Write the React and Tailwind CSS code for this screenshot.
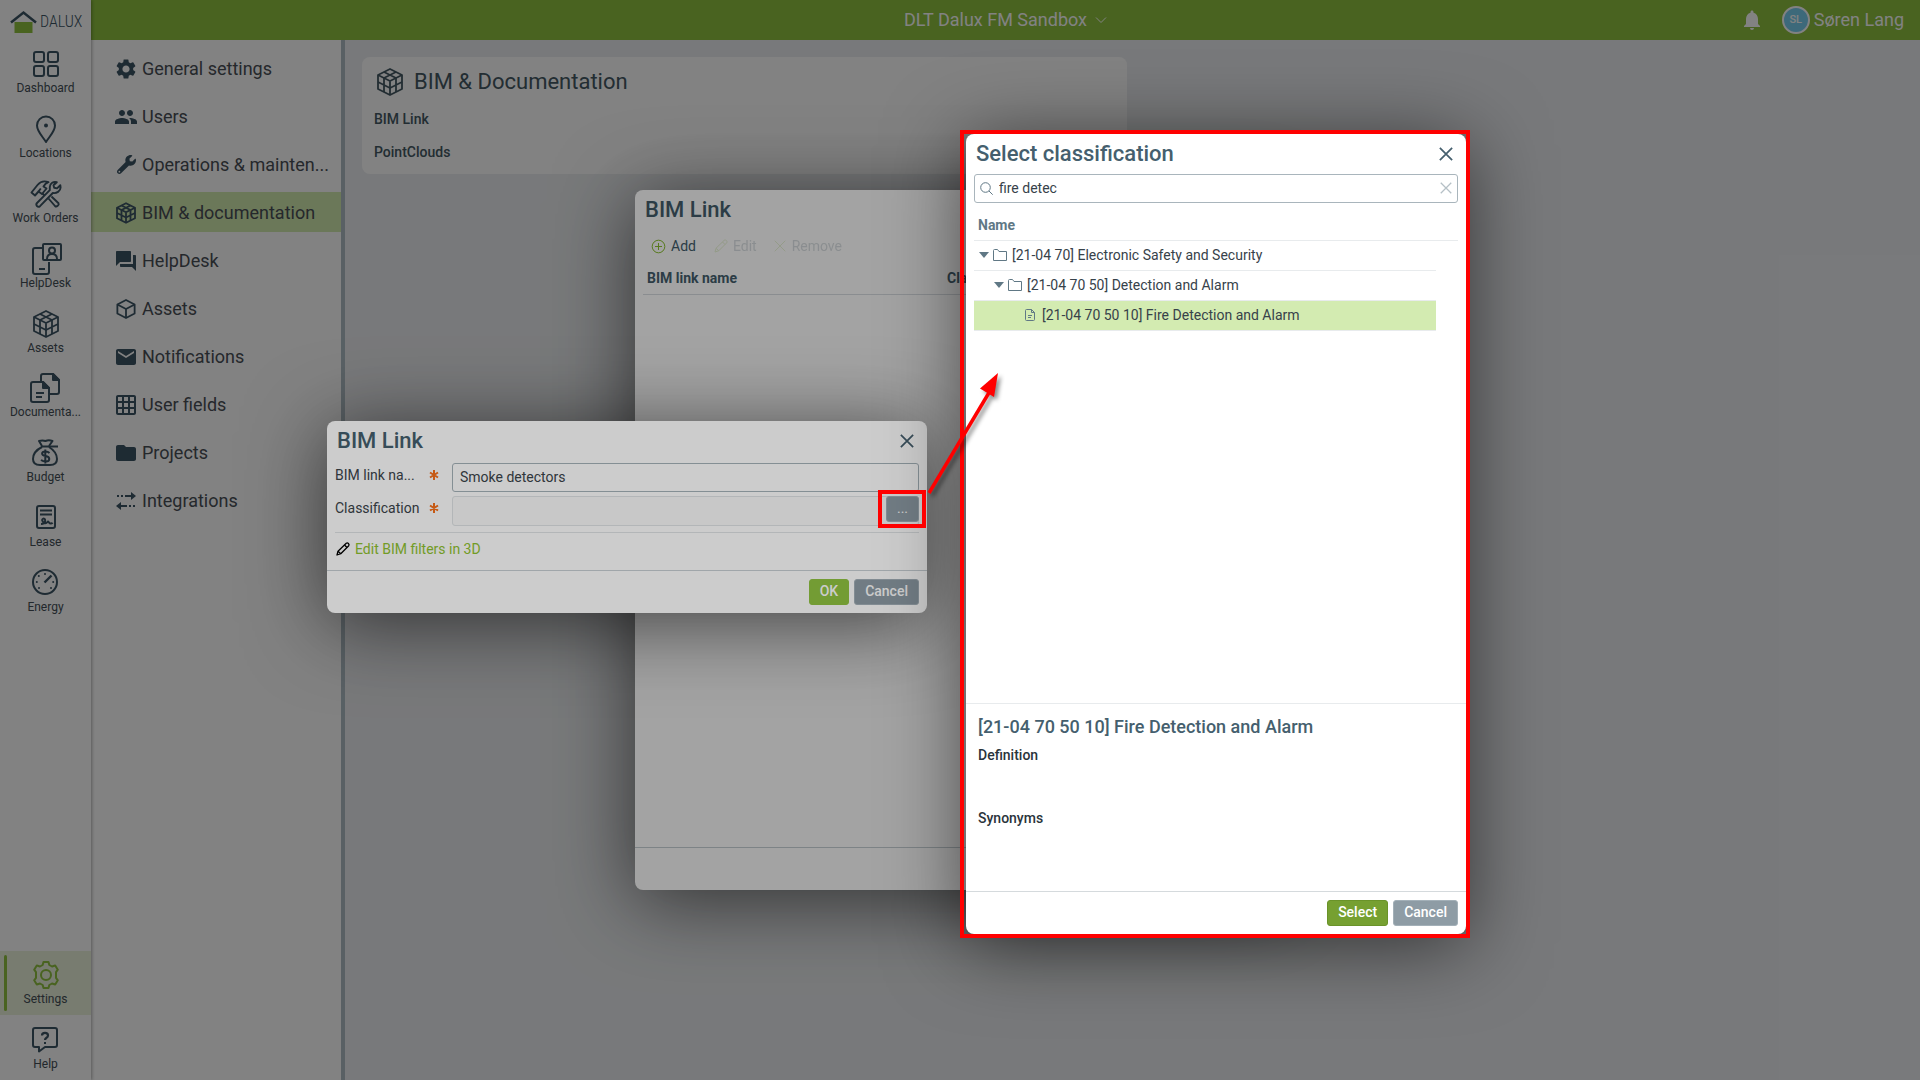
import React from "react";
import {
  MdSettings,
  MdPeople,
  MdForum,
  MdEmail,
  MdGridOn,
  MdFolder,
  MdNotifications,
} from "react-icons/md";
import { FaWrench } from "react-icons/fa";

/* ---------- icons ---------- */

function Stroke({ size = 32, width = 2, className = "", children }) {
  return (
    <svg
      width={size}
      height={size}
      viewBox="0 0 32 32"
      fill="none"
      stroke="currentColor"
      strokeWidth={width}
      strokeLinejoin="round"
      strokeLinecap="butt"
      className={className}
      aria-hidden="true"
    >
      {children}
    </svg>
  );
}

const DashboardIcon = () => (
  <Stroke>
    <rect x="4" y="4" width="10" height="10" rx="2" />
    <rect x="18" y="4" width="10" height="10" rx="2" />
    <rect x="4" y="18" width="10" height="10" rx="2" />
    <rect x="18" y="18" width="10" height="10" rx="2" />
  </Stroke>
);

const PinIcon = () => (
  <Stroke>
    <path d="M16 29C13 24 7 18.500 7 12.500a9 9 0 0 1 18 0C25 18.500 19 24 16 29Z" />
    <circle cx="16" cy="12.500" r="2" fill="currentColor" stroke="none" />
  </Stroke>
);

const ToolsIcon = () => (
  <Stroke width={1.9}>
    <path d="M1.500 14.500 5 17.500 8.500 13.500 12 16 16.500 10.500 13.500 8.500C14.500 6.500 16.500 4.800 18.500 4.200 14 2.500 10 4 7.500 7Z" />
    <path d="M8.500 13.500 10.800 10.500M12.500 15.500 14.500 17.500M18.500 20.500 25 28C26.500 29.500 29.500 27 28.500 25.200L21.500 18.500" />
    <path d="M26.800 4.200C23.500 3.200 20 5.200 19.800 9L19.800 12.200 7 25C5.200 27 7.800 30 10 28.200L22.800 15C26.500 15.800 30.500 13 30.600 9.500L30.300 7.200 27 10.400 24.200 9.800 23.500 7.200Z" />
  </Stroke>
);

const HelpDeskIcon = () => (
  <Stroke>
    <path d="M12 5H5a2 2 0 0 0-2 2v22a2 2 0 0 0 2 2h12a2 2 0 0 0 2-2V19" />
    <path d="M9 26h6" />
    <rect x="13" y="1" width="18" height="16" rx="1" />
    <circle cx="22" cy="7.500" r="3" />
    <path d="M17 16c0-3.500 2-5 5-5s5 1.500 5 5" />
  </Stroke>
);

const CubeGrid = ({ size = 32, width = 1.8 }) => (
  <Stroke size={size} width={width}>
    <path d="M16 3 28 9V23L16 29 4 23V9Z" />
    <path d="M4 9 16 15 28 9M16 15V29" />
    <path d="M10 12V26M22 12V26M4 16 16 22 28 16M10 6 22 12M22 6 10 12" />
  </Stroke>
);

const DocsIcon = () => (
  <Stroke>
    <path d="M11 9V4a2 2 0 0 1 2-2h10l6 6v12a2 2 0 0 1-2 2h-8" />
    <path d="M23 2v6h6Z" fill="currentColor" />
    <path d="M3 10h10l6 6v12a2 2 0 0 1-2 2H3a2 2 0 0 1-2-2V12a2 2 0 0 1 2-2Z" />
    <path d="M13 10v6h6Z" fill="currentColor" />
    <path d="M6 21h8M6 25h6" />
  </Stroke>
);

const BudgetIcon = () => (
  <Stroke>
    <path d="M12 9 9 4c3-1 4-1 6.500 0 2.500-1 4-1 7 0L19 9" />
    <path d="M11 9.500h17" />
    <path d="M12 10C7 12.500 3 17 3 22c0 4 3 6 7 6h10c4 0 7-2 7-6 0-5-4-9.500-8-12" />
    <path d="M19.500 16c-1-1-2-1.500-4-1.500-4.500 0-4.500 4 0 4.500 5 .500 5 5.500 0 5.500-2 0-3-.500-4.500-1.500M15.300 12.500v14" />
  </Stroke>
);

const LeaseIcon = () => (
  <Stroke>
    <rect x="7" y="4" width="18" height="22" rx="2" />
    <path d="M10 8.500h12M10 12.500h12" />
    <path d="M11 22c2.500 0 5-2 4-4.500-1-2-3.500-.500-2.500 1.500 1 2.500 3.500 3 5 1 1-1.500 1.500 1.500 2.500 1.500s1.500-1 2.500.500" />
  </Stroke>
);

const EnergyIcon = () => (
  <Stroke>
    <circle cx="15" cy="15" r="12" />
    <path d="M14.500 15.500 21.500 8.500" strokeWidth="2.400" />
    <g fill="currentColor" stroke="none">
      <circle cx="15" cy="7" r="1" />
      <circle cx="8.800" cy="9" r="1" />
      <circle cx="6.800" cy="15" r="1" />
      <circle cx="9" cy="21" r="1" />
      <circle cx="21" cy="21" r="1" />
      <circle cx="23.200" cy="15" r="1" />
    </g>
  </Stroke>
);

const GearOutline = () => (
  <Stroke>
    <path d="M13.500 3h5l.8 3 2.700 1.500 3.200-1 2.600 4.200L26 13.200v5.600l1.800 2.500-2.600 4.200-3.200-1-2.700 1.500-.8 3h-5l-.8-3L10 24.500l-3.200 1-2.600-4.200L6 18.800v-5.600L4.200 10.700l2.600-4.200 3.200 1L12.700 6Z" />
    <circle cx="16" cy="16" r="5" />
  </Stroke>
);

const HelpIcon = () => (
  <Stroke>
    <path d="M5 4h20a2 2 0 0 1 2 2v15a2 2 0 0 1-2 2H15l-6 4.500V23H5a2 2 0 0 1-2-2V6a2 2 0 0 1 2-2Z" />
    <path d="M12 11.500c0-3.500 6-3.500 6 0 0 2.500-3 2-3 4.500" strokeWidth="2.200" />
    <rect x="14" y="18" width="2" height="2" fill="currentColor" stroke="none" />
  </Stroke>
);

const BoxIcon = () => (
  <Stroke size={24} width={2.4}>
    <path d="M16 4 27.500 10V22L16 28 4.500 22V10Z" />
    <path d="M4.500 10 16 16 27.500 10M16 16V28" />
  </Stroke>
);

const IntegrationsIcon = () => (
  <svg width="24" height="24" viewBox="0 0 24 24" fill="currentColor" aria-hidden="true">
    <path d="M3 6h2v2H3zM7 6h2v2H7zM11 6h6V3l5 4-5 4V8h-6zM19 16h2v2h-2zM15 16h2v2h-2zM13 16H7v-3l-5 4 5 4v-3h6z" />
  </svg>
);

const PencilIcon = ({ className = "", width = 2 }) => (
  <Stroke size={16} width={width} className={className}>
    <path d="M4 28 6 20.500 22.500 4.500c3-2 7 2 5 5L11.500 25.500Z" />
    <path d="M19 8l5 5M6 20.500l5.500 5" />
  </Stroke>
);

const CrossIcon = ({ size = 14, width = 4 }) => (
  <Stroke size={size} width={width}>
    <path d="M2 2 30 30M30 2 2 30" />
  </Stroke>
);

const FolderIcon = () => (
  <svg width="14" height="12" viewBox="0 0 14 12" fill="none" stroke="currentColor" aria-hidden="true">
    <path d="M.5 11.500V1.500a1 1 0 0 1 1-1h3l1.500 2h7.500v9Z" />
  </svg>
);

const FileIcon = () => (
  <svg width="10" height="12" viewBox="0 0 10 12" fill="none" stroke="currentColor" aria-hidden="true">
    <path d="M.5 1.500a1 1 0 0 1 1-1h5l3 3v7a1 1 0 0 1-1 1h-7a1 1 0 0 1-1-1ZM6.500.5v3h3M3 6.500h4M3 8.500h3" />
  </svg>
);

const Asterisk = () => (
  <svg width="10" height="10" viewBox="0 0 10 10" stroke="currentColor" strokeWidth="2" aria-hidden="true">
    <path d="M5 0v10M1 2.500l8 5M9 2.500l-8 5" />
  </svg>
);

const Logo = () => (
  <div className="flex h-10 items-center pl-[10px] pt-1">
    <svg width="27" height="24" viewBox="0 0 27 24" aria-hidden="true">
      <path d="M4.500 12h18v11h-18z" fill="#90c341" />
      <path d="M1 12.500 13.500 2.500 26 12.500" fill="none" stroke="#3d5565" strokeWidth="2.500" />
    </svg>
    <span className="ml-[3px] font-['Liberation_Sans_Narrow','Roboto_Condensed',Roboto,sans-serif] text-[16px] font-light leading-6 text-[#3d5565]">
      DALUX
    </span>
  </div>
);

/* ---------- page ---------- */

const railItems = [
  ["Dashboard", DashboardIcon],
  ["Locations", PinIcon],
  ["Work Orders", ToolsIcon],
  ["HelpDesk", HelpDeskIcon],
  ["Assets", CubeGrid],
  ["Documenta...", DocsIcon],
  ["Budget", BudgetIcon],
  ["Lease", LeaseIcon],
  ["Energy", EnergyIcon],
];

const settingsItems = [
  ["General settings", <MdSettings size={24} />],
  ["Users", <MdPeople size={24} />],
  ["Operations & mainten...", <FaWrench size={19} />],
  ["BIM & documentation", <CubeGrid size={24} width={2.4} />],
  ["HelpDesk", <MdForum size={24} />],
  ["Assets", <BoxIcon />],
  ["Notifications", <MdEmail size={24} />],
  ["User fields", <MdGridOn size={24} />],
  ["Projects", <MdFolder size={24} />],
  ["Integrations", <IntegrationsIcon />],
];

function RailItem({ label, Icon, active }) {
  return (
    <a
      href="#"
      className={`relative flex h-16 flex-col items-center px-1 pt-2 text-[#455058] ${
        active ? "bg-[#ebf3dc]" : ""
      }`}
    >
      {active && <span className="absolute bottom-1 left-1 top-1 w-[3px] rounded-full bg-[#90c341]" />}
      <span className={active ? "text-[#90c341]" : "text-[#3d5565]"}>
        <Icon />
      </span>
      <span className="whitespace-nowrap text-center text-xs leading-4">{label}</span>
    </a>
  );
}

function Rail() {
  return (
    <aside className="z-10 flex w-[91px] shrink-0 flex-col bg-white shadow-[1px_0_3px_rgba(0,0,0,0.3)]">
      <Logo />
      <nav className="flex h-[583px] flex-col justify-between">
        {railItems.map(([label, Icon]) => (
          <RailItem key={label} label={label} Icon={Icon} />
        ))}
      </nav>
      <nav className="mt-auto flex flex-col gap-px">
        <RailItem label="Settings" Icon={GearOutline} active />
        <RailItem label="Help" Icon={HelpIcon} />
      </nav>
    </aside>
  );
}

function TopBar() {
  return (
    <header className="grid h-10 grid-cols-[1fr_auto_1fr] items-center bg-[#90c341] text-lg leading-6 text-white">
      <span />
      <button type="button" className="flex items-center gap-2">
        DLT Dalux FM Sandbox
        <svg width="12" height="14" viewBox="0 0 12 14" fill="none" stroke="currentColor" aria-hidden="true">
          <path d="M1 4.500 6 9.500 11 4.500" />
        </svg>
      </button>
      <div className="flex items-center justify-end pr-4">
        <MdNotifications size={24} />
        <span className="ml-[18px] flex size-7 items-center justify-center rounded-full border-2 border-white bg-[#7ad0f0] text-[11px] font-medium leading-4">
          SL
        </span>
        <span className="ml-1">Søren Lang</span>
      </div>
    </header>
  );
}

function SettingsMenu() {
  return (
    <nav className="flex w-[254px] shrink-0 flex-col gap-2 border-r-4 border-[#b0bfc6] bg-white pt-2">
      {settingsItems.map(([label, icon]) => (
        <a
          key={label}
          href="#"
          className={`flex h-10 items-center gap-1 pl-[23px] pt-px text-lg text-[#4a5057] ${
            label === "BIM & documentation" ? "bg-[#d3ebb1]" : ""
          }`}
        >
          <span className="flex w-6 shrink-0 justify-center text-[#3d5565]">{icon}</span>
          <span className="whitespace-nowrap">{label}</span>
        </a>
      ))}
    </nav>
  );
}

function Content() {
  return (
    <main className="flex-1 bg-[#edeff2] pt-[17px]">
      <div className="w-1/2 pl-[17px] pr-[6px]">
        <section className="rounded-lg bg-white px-3 pb-[5px] pt-[6px] text-[#455a64]">
          <h1 className="flex items-center gap-2 text-[22px] leading-9">
            <CubeGrid />
            <span className="pt-px">BIM & Documentation</span>
          </h1>
          <a href="#" className="mt-[3px] block text-sm font-medium leading-[33px]">
            BIM Link
          </a>
          <a href="#" className="block text-sm font-medium leading-[33px]">
            PointClouds
          </a>
        </section>
      </div>
    </main>
  );
}

/* ---------- dialogs ---------- */

const dialogShadow = "shadow-[0_10px_80px_rgba(0,0,0,0.6)]";

function Veil() {
  return <div className="absolute inset-0 bg-black/20" />;
}

function DialogTitle({ children }) {
  return (
    <div className="flex h-10 items-center justify-between pl-[10px] pr-[13px]">
      <h2 className="text-[22px] font-medium leading-8 text-[#455f6e]">{children}</h2>
      <button type="button" aria-label="Close" className="text-[#455f6e]">
        <CrossIcon />
      </button>
    </div>
  );
}

function PushButton({ children, primary }) {
  return (
    <button
      type="button"
      className={`h-[26px] rounded-[3px] border px-[10px] pb-[2px] text-sm font-medium leading-5 text-white ${
        primary ?? "border-[#a3b0b8] bg-[#8e9ca5]"
      }`}
    >
      {children}
    </button>
  );
}

function LinkListDialog() {
  return (
    <section className={`flex min-h-[700px] w-[650px] flex-col rounded-lg bg-white ${dialogShadow}`}>
      <DialogTitle>BIM Link</DialogTitle>
      <div className="flex h-8 items-center gap-[17px] pl-4 text-sm text-[#455f6e]">
        <button type="button" className="flex items-center gap-[5px]">
          <svg width="15" height="15" viewBox="0 0 15 15" fill="none" stroke="#8ac02f" aria-hidden="true">
            <circle cx="7.500" cy="7.500" r="6.300" />
            <path d="M7.500 4v7M4 7.500h7" />
          </svg>
          Add
        </button>
        <button type="button" disabled className="flex items-center gap-1 opacity-20">
          <PencilIcon className="text-[#8ac02f]" />
          Edit
        </button>
        <button type="button" disabled className="flex items-center gap-[6px] opacity-20">
          <span className="text-[#8ac02f]">
            <CrossIcon size={12} width={2.5} />
          </span>
          Remove
        </button>
      </div>
      <table className="mx-2 table-fixed text-left text-sm text-[#455f6e]">
        <thead>
          <tr className="border-b border-[#d9dee1]">
            <th className="h-8 w-[300px] px-1 pt-px font-bold">BIM link name</th>
            <th className="px-1 pt-px font-bold">Classification</th>
          </tr>
        </thead>
      </table>
      <div className="mt-auto h-[43px] border-t border-[#c5cdd2]" />
    </section>
  );
}

function EditLinkDialog() {
  return (
    <form className={`w-[600px] rounded-lg bg-white text-sm text-[#3b444a] ${dialogShadow}`}>
      <DialogTitle>BIM Link</DialogTitle>
      <div className="grid grid-cols-[90px_19px_1fr] gap-x-1 gap-y-1 px-2 pt-[2px]">
        <label htmlFor="link-name" className="whitespace-nowrap leading-6">
          BIM link na...
        </label>
        <span className="flex h-6 items-center text-[#f8701a]">
          <Asterisk />
        </span>
        <input
          id="link-name"
          defaultValue="Smoke detectors"
          className="h-[29px] w-full min-w-0 rounded-[3px] border border-[#a6b3ba] bg-white px-[7px] pb-px"
        />
        <label htmlFor="link-class" className="leading-6">
          Classification
        </label>
        <span className="flex h-6 items-center text-[#f8701a]">
          <Asterisk />
        </span>
        <div className="flex h-[30px] min-w-0 rounded-[3px] border border-[#e0e4e6] bg-[#fafafa]">
          <input id="link-class" readOnly className="min-w-0 flex-1 bg-transparent px-2" />
          <button
            type="button"
            aria-label="Choose classification"
            className="-mr-px -mt-px h-[26px] w-[33px] rounded-[3px] border border-[#a3b0b8] bg-[#8e9ca5] pb-[2px] leading-5 text-white"
          >
            ...
          </button>
        </div>
      </div>
      <div className="mx-2 mt-[6px] flex h-[38px] items-center gap-1 border-t border-[#e0e4e6] pb-[6px]">
        <PencilIcon className="text-black" width={2.6} />
        <a href="#" className="text-[#8fc32f]">
          Edit BIM filters in 3D
        </a>
      </div>
      <footer className="flex justify-end gap-[5px] border-t border-[#c9d0d5] px-2 py-2">
        <PushButton primary="border-[#90c341] bg-[#90c341]">OK</PushButton>
        <PushButton>Cancel</PushButton>
      </footer>
    </form>
  );
}

const indents = ["pl-[5px]", "pl-5", "pl-[51px]"];

function TreeRow({ level, leaf, children }) {
  return (
    <li
      className={`flex h-[30px] items-center border-b border-[#e8ebed] pb-[2px] text-sm text-[#37424a] ${indents[level]} ${
        leaf ? "bg-[#d3ebb1]" : ""
      }`}
    >
      {!leaf && (
        <svg width="10" height="6" viewBox="0 0 10 6" fill="#607885" className="mr-1" aria-hidden="true">
          <path d="M0 0h10L5 6z" />
        </svg>
      )}
      <span className={`text-[#607885] ${leaf ? "mr-[7px]" : "mr-[5px]"}`}>
        {leaf ? <FileIcon /> : <FolderIcon />}
      </span>
      {children}
    </li>
  );
}

function SelectDialog() {
  return (
    <section className={`flex h-[800px] w-[500px] flex-col rounded-lg bg-white ${dialogShadow}`}>
      <DialogTitle>Select classification</DialogTitle>
      <div className="mx-2 flex h-[29px] items-center rounded-[3px] border border-[#a9b5bc] px-[5px] pb-px">
        <svg width="13" height="13" viewBox="0 0 13 13" fill="none" stroke="#607885" aria-hidden="true">
          <circle cx="5.500" cy="5.500" r="4.800" />
          <path d="M9 9l3.700 3.700" />
        </svg>
        <input
          aria-label="Search"
          defaultValue="fire detec"
          className="ml-[6px] min-w-0 flex-1 bg-transparent text-sm text-[#37424a]"
        />
        <button type="button" aria-label="Clear" className="text-[#b5c0c6]">
          <CrossIcon size={12} width={3.5} />
        </button>
      </div>
      <div className="mx-2 mt-[7px] border-b border-[#e8ebed] px-1 text-sm font-bold leading-[30px] text-[#607885]">
        Name
      </div>
      <ul className="ml-2 mr-[30px]">
        <TreeRow level={0}>[21-04 70] Electronic Safety and Security</TreeRow>
        <TreeRow level={1}>[21-04 70 50] Detection and Alarm</TreeRow>
        <TreeRow level={2} leaf>
          [21-04 70 50 10] Fire Detection and Alarm
        </TreeRow>
      </ul>
      <div className="mt-auto h-[188px] border-t border-[#e8ebed] px-3 pt-[7px] text-[#2a343b]">
        <h3 className="text-lg font-medium leading-8 text-[#455f6e]">[21-04 70 50 10] Fire Detection and Alarm</h3>
        <h4 className="text-sm font-medium leading-6">Definition</h4>
        <h4 className="mt-[39px] text-sm font-medium leading-6">Synonyms</h4>
      </div>
      <footer className="flex justify-end gap-[5px] border-t border-[#d5dadd] px-2 py-2">
        <PushButton primary="border-[#6a9329] bg-[#76a031]">Select</PushButton>
        <PushButton>Cancel</PushButton>
      </footer>
    </section>
  );
}

function Arrow() {
  return (
    <svg
      width="90"
      height="140"
      viewBox="0 0 90 140"
      className="absolute left-[920px] top-[365px] drop-shadow-[3px_3px_2px_rgba(0,0,0,0.45)]"
      aria-hidden="true"
    >
      <path d="M9 128 70 26" stroke="#ff0000" strokeWidth="3.500" />
      <path d="M78 8 60 23.500 74 32Z" fill="#ff0000" />
    </svg>
  );
}

export default function App() {
  return (
    <div className="relative min-h-screen overflow-hidden font-[Roboto,sans-serif]">
      <div className="flex min-h-screen">
        <Rail />
        <div className="flex flex-1 flex-col">
          <TopBar />
          <div className="flex flex-1">
            <SettingsMenu />
            <Content />
          </div>
        </div>
      </div>

      <div className="absolute inset-0 z-20">
        <Veil />
        <div className="absolute inset-0 flex items-center justify-center">
          <LinkListDialog />
        </div>
        <Veil />
        <div className="absolute left-[327px] top-[421px]">
          <EditLinkDialog />
        </div>
        <Veil />
        <div className="absolute left-[966px] top-[134px]">
          <SelectDialog />
        </div>
        <div className="pointer-events-none absolute left-[960px] top-[130px] h-[808px] w-[510px] border-4 border-[#ff0000]" />
        <div className="pointer-events-none absolute left-[878px] top-[490px] h-[38px] w-12 border-4 border-[#ff0000]" />
        <Arrow />
      </div>
    </div>
  );
}
